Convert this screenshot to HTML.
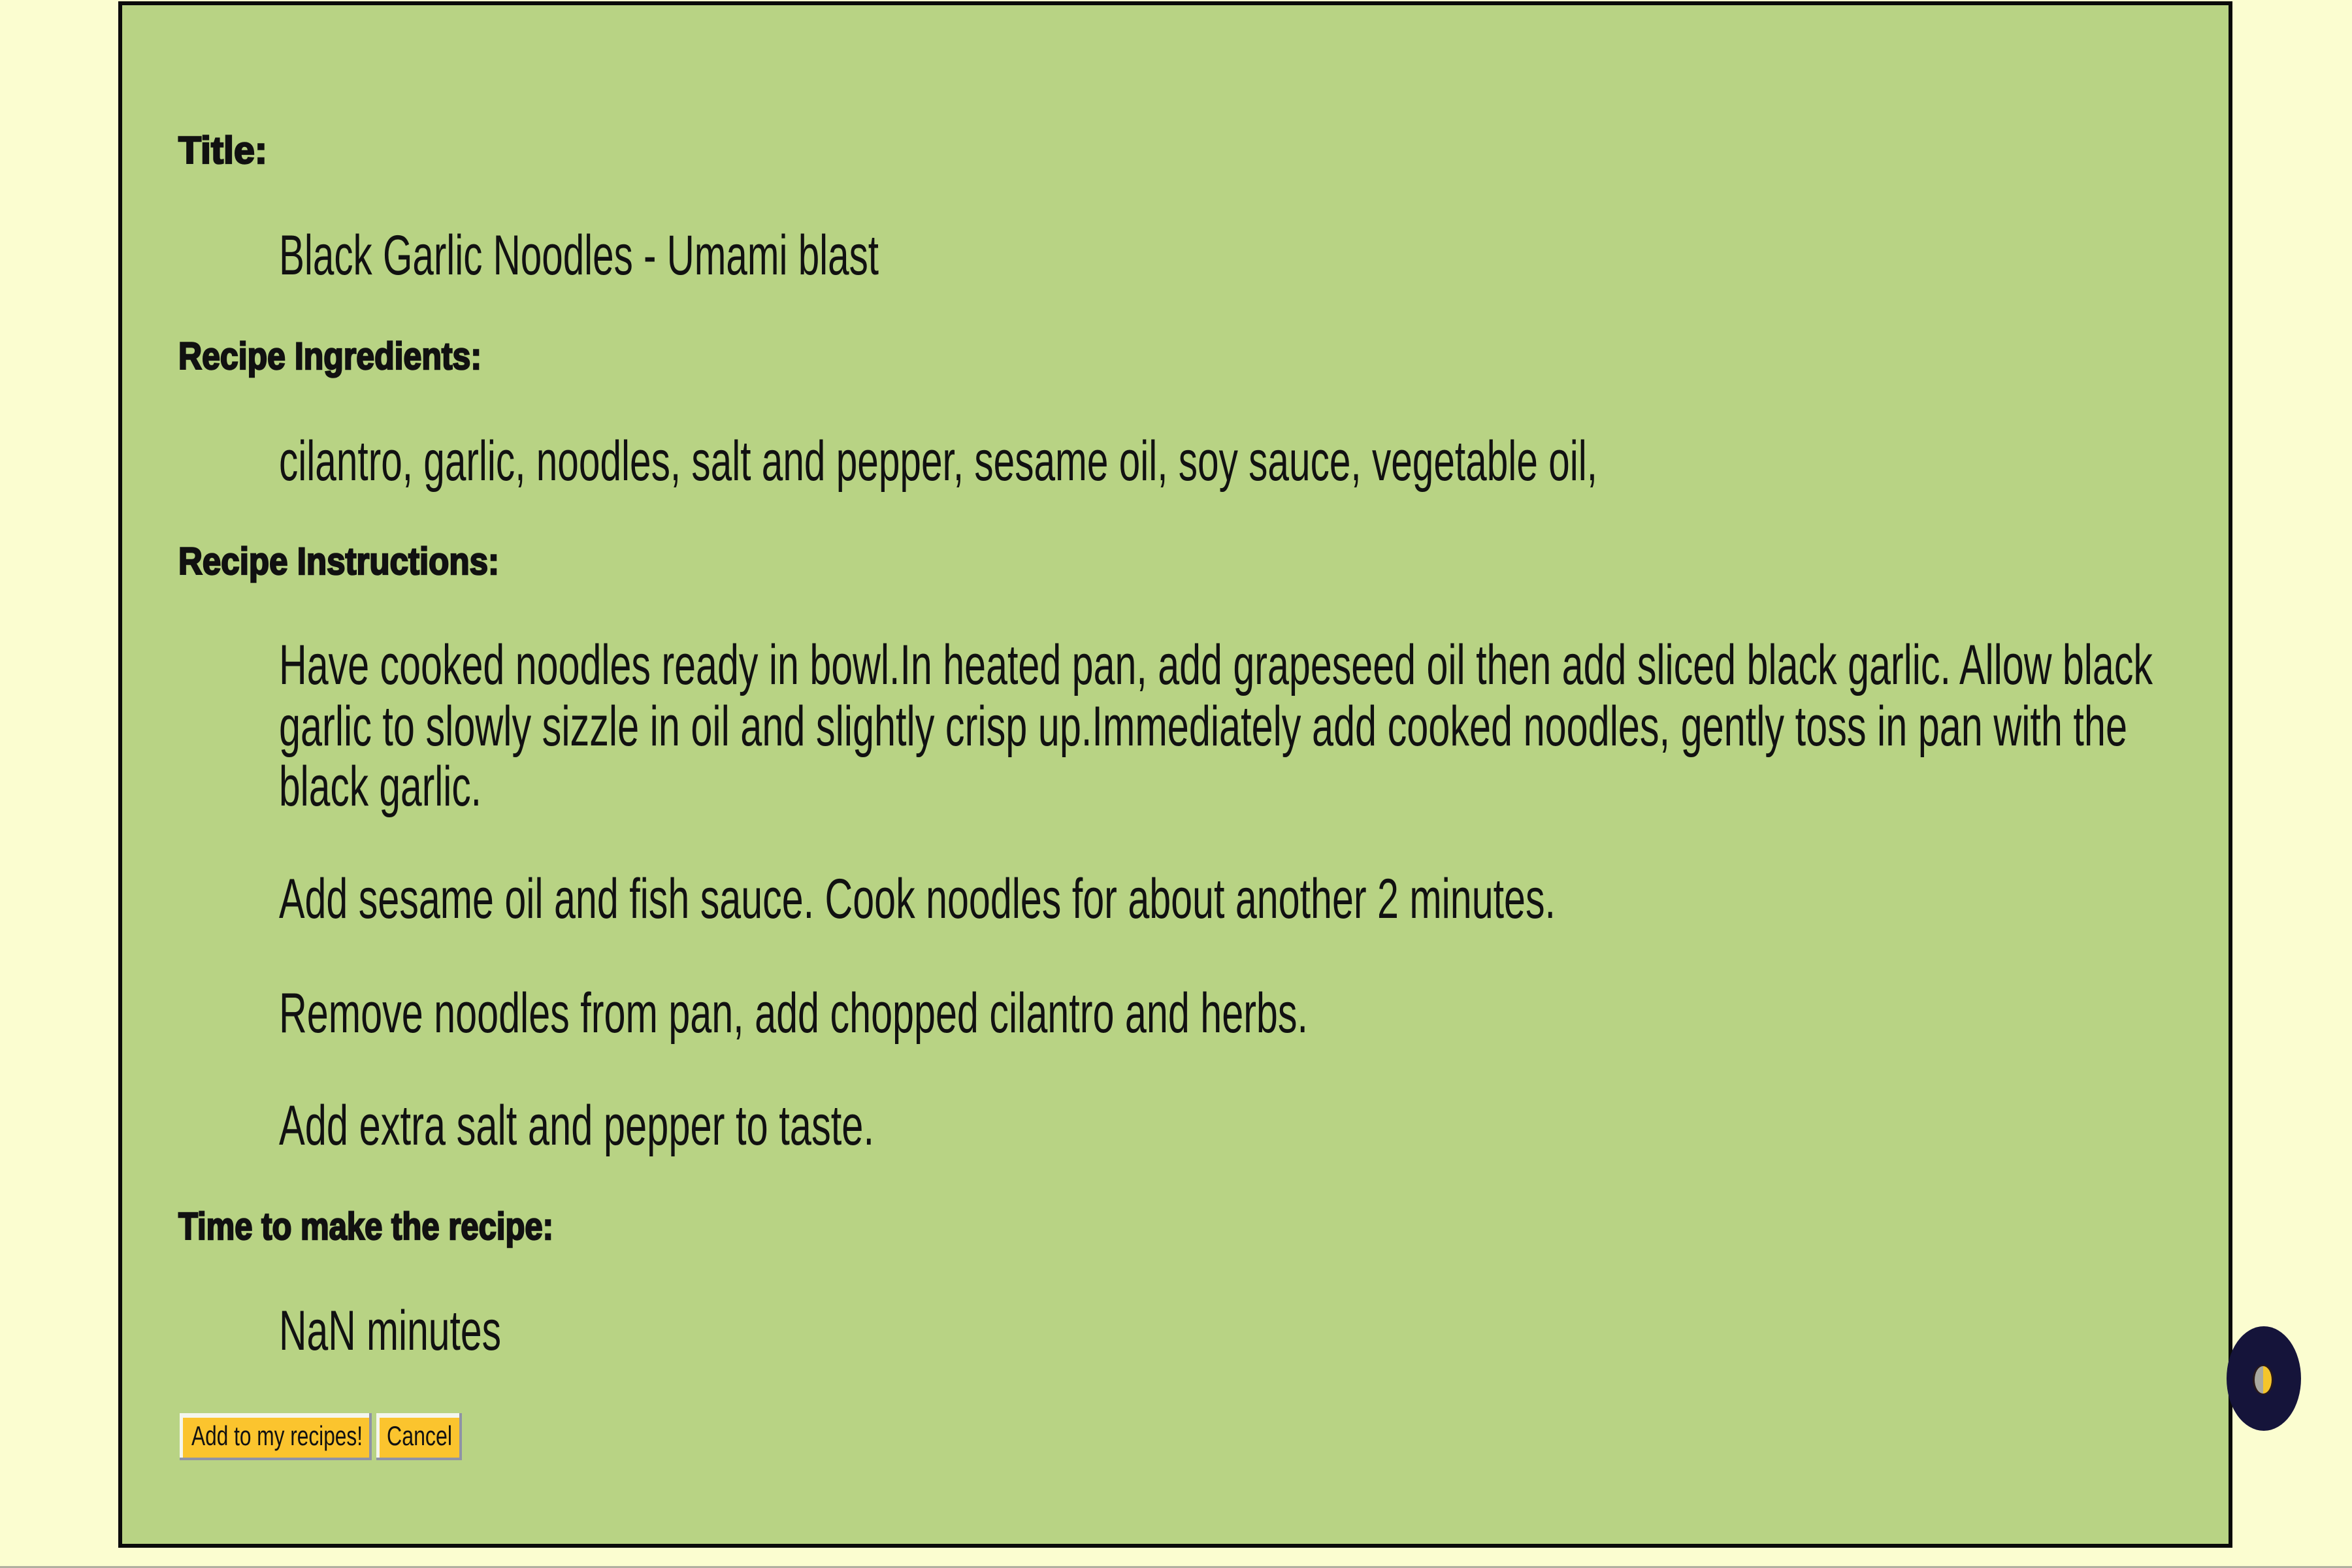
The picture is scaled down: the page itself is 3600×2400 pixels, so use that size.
<!DOCTYPE html>
<html><head><meta charset="utf-8">
<style>
html,body{margin:0;padding:0;width:3600px;height:2400px;overflow:hidden;background:#fbfdd0;}
svg{display:block}
.lab{font-family:"Liberation Sans",sans-serif;font-weight:bold;font-size:58px;fill:#111;stroke:#111;stroke-width:2.5px;}
.txt{font-family:"Liberation Sans",sans-serif;font-size:86px;fill:#111;}
.btn{font-family:"Liberation Sans",sans-serif;font-size:42px;fill:#111;}
</style></head>
<body>
<svg width="3600" height="2400" viewBox="0 0 3600 2400" xmlns="http://www.w3.org/2000/svg">
<rect x="0" y="0" width="3600" height="2400" fill="#fbfdd0"/>
<rect x="184" y="5" width="3230" height="2361" fill="#b8d384" stroke="#0a0a0a" stroke-width="6"/>

<text class="lab" x="273" y="250" textLength="136" lengthAdjust="spacingAndGlyphs">Title:</text>
<text class="txt" x="427" y="420" textLength="918" lengthAdjust="spacingAndGlyphs">Black Garlic Noodles - Umami blast</text>

<text class="lab" x="273" y="565" textLength="464" lengthAdjust="spacingAndGlyphs">Recipe Ingredients:</text>
<text class="txt" x="427" y="735" textLength="2018" lengthAdjust="spacingAndGlyphs">cilantro, garlic, noodles, salt and pepper, sesame oil, soy sauce, vegetable oil,</text>

<text class="lab" x="273" y="879" textLength="491" lengthAdjust="spacingAndGlyphs">Recipe Instructions:</text>
<text class="txt" x="427" y="1047" textLength="2868" lengthAdjust="spacingAndGlyphs">Have cooked noodles ready in bowl.In heated pan, add grapeseed oil then add sliced black garlic. Allow black</text>
<text class="txt" x="427" y="1141" textLength="2829" lengthAdjust="spacingAndGlyphs">garlic to slowly sizzle in oil and slightly crisp up.Immediately add cooked noodles, gently toss in pan with the</text>
<text class="txt" x="427" y="1233" textLength="310" lengthAdjust="spacingAndGlyphs">black garlic.</text>
<text class="txt" x="427" y="1405" textLength="1954" lengthAdjust="spacingAndGlyphs">Add sesame oil and fish sauce. Cook noodles for about another 2 minutes.</text>
<text class="txt" x="427" y="1580" textLength="1575" lengthAdjust="spacingAndGlyphs">Remove noodles from pan, add chopped cilantro and herbs.</text>
<text class="txt" x="427" y="1752" textLength="911" lengthAdjust="spacingAndGlyphs">Add extra salt and pepper to taste.</text>

<text class="lab" x="273" y="1897" textLength="574" lengthAdjust="spacingAndGlyphs">Time to make the recipe:</text>
<text class="txt" x="427" y="2066" textLength="340" lengthAdjust="spacingAndGlyphs">NaN minutes</text>

<!-- buttons -->
<rect x="275" y="2163" width="294" height="72" fill="#8f93a6"/>
<rect x="275" y="2163" width="290" height="68" fill="#f4f6ee"/>
<rect x="280" y="2170" width="285" height="61" fill="#fbc42e"/>
<text class="btn" x="293" y="2212" textLength="262" lengthAdjust="spacingAndGlyphs">Add to my recipes!</text>
<rect x="576" y="2163" width="131" height="72" fill="#8f93a6"/>
<rect x="576" y="2163" width="127" height="68" fill="#f4f6ee"/>
<rect x="581" y="2170" width="122" height="61" fill="#fbc42e"/>
<text class="btn" x="592" y="2212" textLength="100" lengthAdjust="spacingAndGlyphs">Cancel</text>

<!-- floating circle -->
<ellipse cx="3465" cy="2110" rx="57" ry="80" fill="#15143a"/>
<ellipse cx="3464" cy="2112" rx="16" ry="23" fill="#2a1a1a"/>
<path d="M3464 2091 A13 21 0 0 0 3464 2133 Z" fill="#a9a9a0"/>
<path d="M3464 2091 A13 21 0 0 1 3464 2133 Z" fill="#f5c52a"/>

<rect x="0" y="2397" width="3600" height="3" fill="#b0b0a0"/>
</svg>
</body></html>
